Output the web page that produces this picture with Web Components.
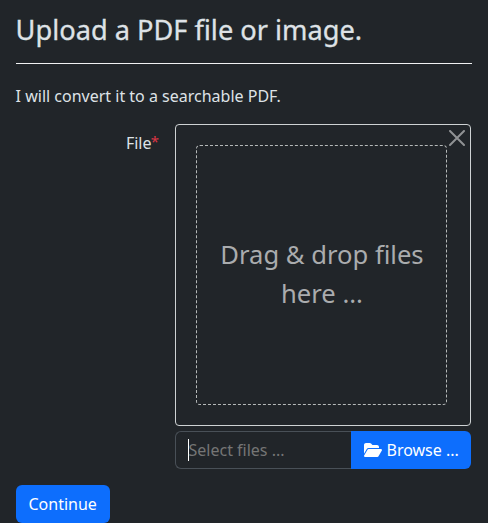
<!DOCTYPE html>
<html lang="en"><head><meta charset="utf-8"><title>Upload</title>
<style>html,body{margin:0;height:523px;overflow:hidden;background:#212529}body{font:16px/24px "Noto Sans",sans-serif;color:#dee2e6}</style></head>
<body><upload-form></upload-form>
<script>
const define=(name,html)=>customElements.define(name,class extends HTMLElement{constructor(){super();this.attachShadow({mode:'open'}).innerHTML=html}});
define('drop-zone',`<style>
:host{display:block;position:relative;box-sizing:border-box;height:302px;padding:20px 23px 20px 20px;border:1px solid #ced2d3;border-radius:4px}
.zone{box-sizing:border-box;height:260px;padding:0 0 2px 1px;border:1px dashed #b5b9b9;border-radius:4px;display:flex;align-items:center;justify-content:center;text-align:center;font-size:25.6px;line-height:39px;color:#aaacae}
svg{position:absolute;right:5px;top:5px}</style>
<div class="zone"><div><slot></slot></div></div>
<svg width="16" height="16" viewBox="0 0 16 16" fill="none" stroke="#909294" stroke-width="2" stroke-linecap="round"><path d="M1 1 15 15M15 1 1 15"/></svg>`);
define('file-picker',`<style>
:host{display:flex;height:38px;margin-top:5px}
.input{box-sizing:border-box;flex:1;border:1px solid #495057;border-right:0;border-radius:6px 0 0 6px;padding:6px 12px;color:#757575;display:flex}
.caret{width:1px;height:22px;margin-top:1px;margin-right:-.5px;background:#fff}
.button{box-sizing:border-box;width:120px;background:#0d6efd;color:#fff;border-radius:0 6px 6px 0;padding:7px 12px 7px 13px;display:flex;gap:4.500px;white-space:nowrap}
svg{margin-top:4px;flex:none}</style>
<div class="input"><i class="caret"></i><span>Select files ...</span></div>
<div class="button"><svg width="18" height="16" viewBox="0 0 576 512" fill="#fff"><path d="M88.700 223.800 0 375.800V96c0-35.300 28.700-64 64-64h117.500c17 0 33.300 6.700 45.300 18.700l26.500 26.500c12 12 28.300 18.800 45.300 18.800H416c35.300 0 64 28.700 64 64v32H144c-22.800 0-43.800 12.100-55.300 31.800zm27.600 16.100C122.100 230 132.600 224 144 224h400c11.500 0 22 6.100 27.700 16.100s5.700 22.200-.1 32.100l-112 192C453.900 474 443.400 480 432 480H32c-11.500 0-22-6.100-27.700-16.100s-5.700-22.200.1-32.100z"/></svg><span>Browse ...</span></div>`);
define('primary-button',`<style>:host{display:inline-block;background:#0d6efd;color:#fff;border-radius:6px;padding:7px 13px 7px 12.500px}</style><slot></slot>`);
define('upload-form',`<style>
:host{display:block;padding:10px 16px 0}
h1{font-size:27.200px;line-height:39px;font-weight:400;-webkit-text-stroke:.3px #dee2e6;margin:0 0 14px -.4px;white-space:nowrap}
hr{border:0;height:1px;background:#f0f1f2;margin:0 0 20px}
p{margin:0 0 16px -.4px}
.row{display:grid;grid-template-columns:143px 296px;column-gap:16px}
label{text-align:right;padding-top:7px}
sup{color:#dc3545;font-size:15px;line-height:0;vertical-align:2px;margin-left:-.8px}
primary-button{margin-top:16px}</style>
<h1>Upload a PDF file or image.</h1><hr><p>I will convert it to a searchable PDF.</p>
<div class="row"><label>File<sup>*</sup></label><div><drop-zone>Drag &amp; drop files<br>here ...</drop-zone><file-picker></file-picker></div></div>
<primary-button>Continue</primary-button>`);
</script></body></html>
